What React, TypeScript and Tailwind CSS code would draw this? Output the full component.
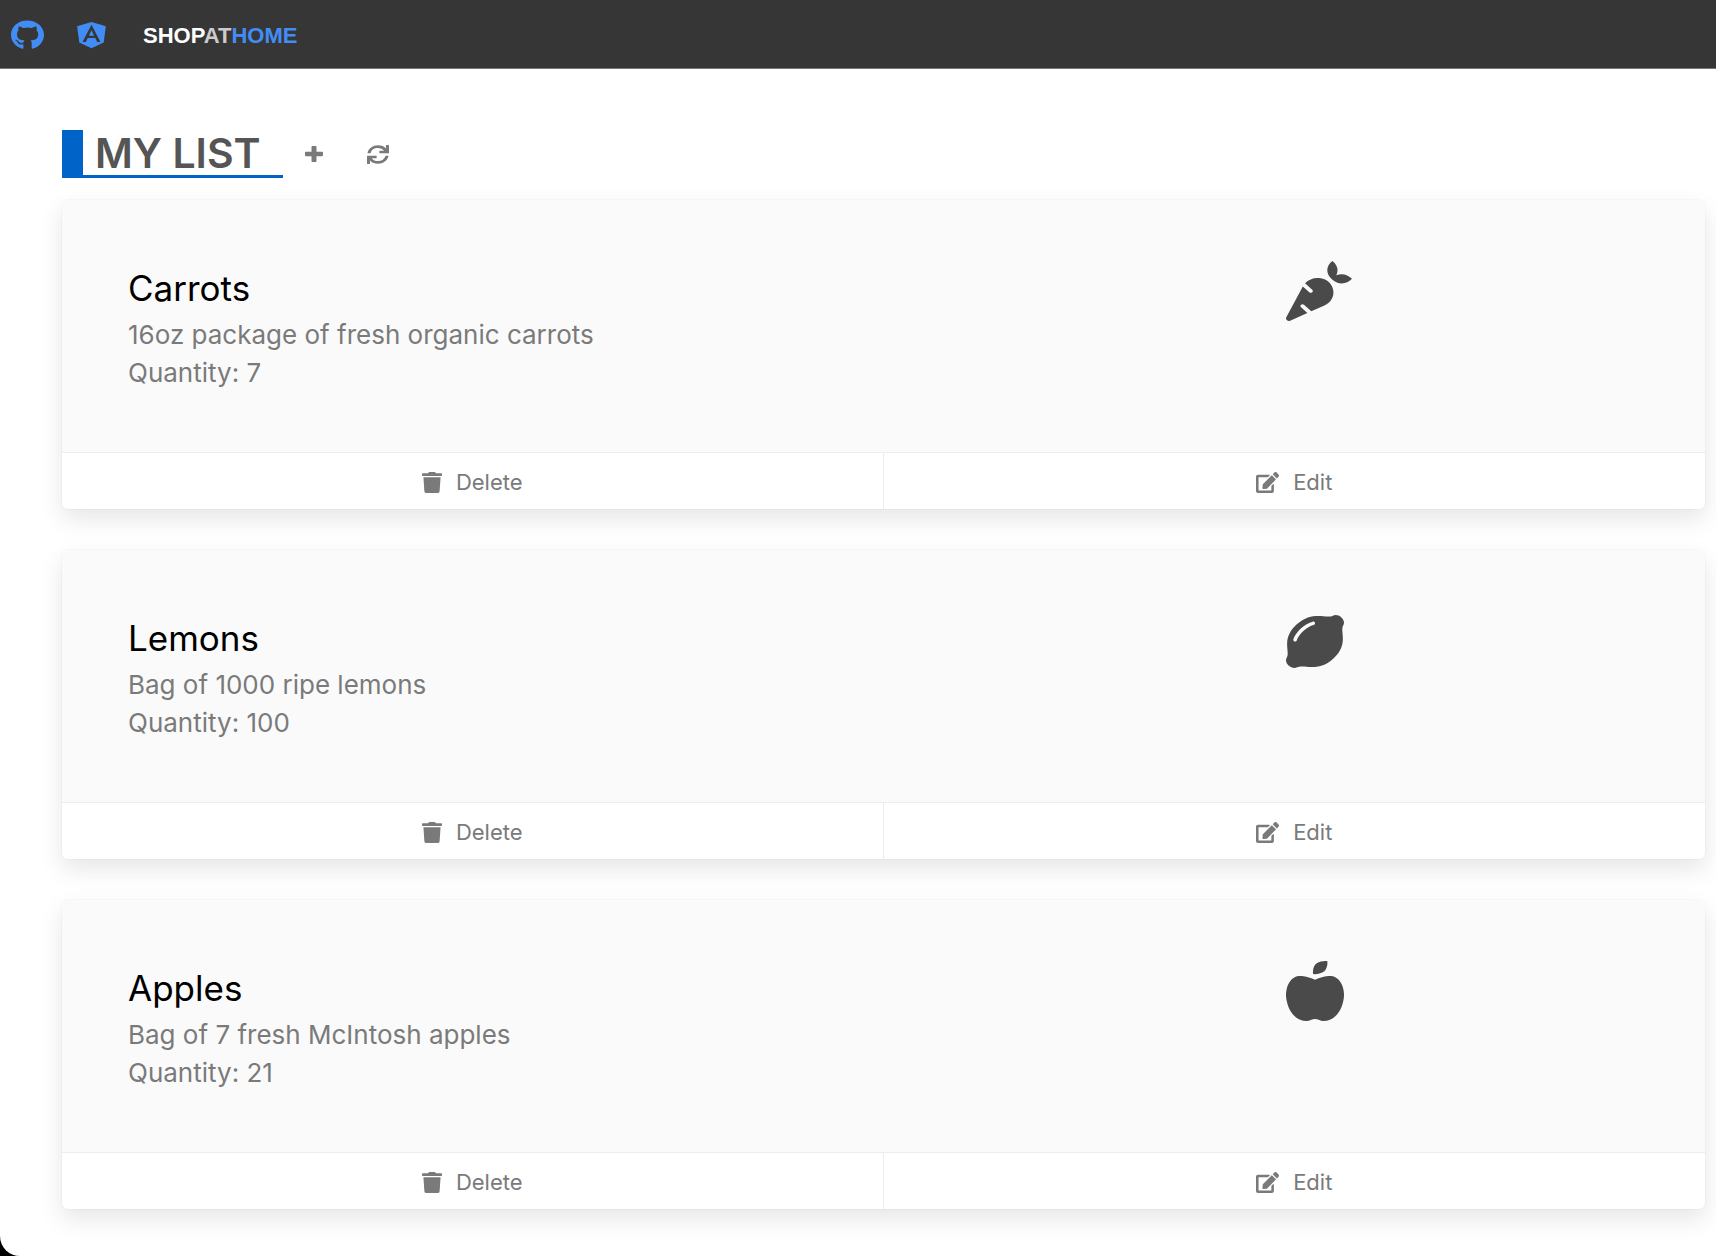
import type { IconType } from "react-icons";
import {
  FaAngular,
  FaAppleAlt,
  FaCarrot,
  FaEdit,
  FaGithub,
  FaLemon,
  FaSync,
  FaTrash,
} from "react-icons/fa";

type Item = {
  name: string;
  description: string;
  quantity: number;
  Icon: IconType;
  iconClass: string;
};

const items: Item[] = [
  {
    name: "Carrots",
    description: "16oz package of fresh organic carrots",
    quantity: 7,
    Icon: FaCarrot,
    iconClass: "h-[60px] w-[66px] text-[#4a4a4a]",
  },
  {
    name: "Lemons",
    description: "Bag of 1000 ripe lemons",
    quantity: 100,
    Icon: FaLemon,
    iconClass: "h-[53px] w-[58px] text-[#4a4a4a]",
  },
  {
    name: "Apples",
    description: "Bag of 7 fresh McIntosh apples",
    quantity: 21,
    Icon: FaAppleAlt,
    iconClass: "h-[60px] w-[58px] text-[#4a4a4a]",
  },
];

function PlusIcon() {
  return (
    <svg
      viewBox="0 32 448 448"
      preserveAspectRatio="none"
      className="h-4 w-[18px] fill-current"
      aria-hidden="true"
    >
      <path d="M424 194H286V56c0-13-11-24-24-24h-76c-13 0-24 11-24 24v138H24c-13 0-24 11-24 24v76c0 13 11 24 24 24h138v138c0 13 11 24 24 24h76c13 0 24-11 24-24V318h138c13 0 24-11 24-24v-76c0-13-11-24-24-24z" />
    </svg>
  );
}

function NavBar() {
  return (
    <nav className="flex h-[69px] items-center border-b border-[#777777] bg-[#363636] pt-0.5 text-[#428df5]">
      <a href="#github" aria-label="GitHub" className="ml-[11px]">
        <FaGithub preserveAspectRatio="none" className="h-[30px] w-[33px]" />
      </a>
      <a href="#angular" aria-label="Angular" className="ml-8">
        <FaAngular preserveAspectRatio="none" className="h-[30px] w-[31px]" />
      </a>
      <a
        href="#home"
        className="ml-9 pt-0.5 font-['Liberation_Sans',sans-serif] text-[22px] leading-6 font-bold"
      >
        <span className="text-white">SHOP</span>
        <span className="text-[#cccccc]">AT</span>
        <span>HOME</span>
      </a>
    </nav>
  );
}

function ItemCard({ name, description, quantity, Icon, iconClass }: Item) {
  return (
    <li className="overflow-hidden rounded-md bg-white shadow-[0_10px_24px_rgba(10,10,10,0.1),0_0_0_1px_rgba(10,10,10,0.02)]">
      <div className="grid h-[252px] grid-cols-2 bg-[#fafafa] pt-[61px]">
        <div className="pt-[5px] pl-[66px]">
          <h2 className="text-[35px] leading-[44px] text-black">{name}</h2>
          <p className="mt-1.5 text-[26px] leading-[38px] text-[#7a7a7a]">{description}</p>
          <p className="text-[26px] leading-[38px] text-[#7a7a7a]">Quantity: {quantity}</p>
        </div>
        <div className="flex h-[60px] items-center pl-[49%]">
          <Icon preserveAspectRatio="none" className={iconClass} />
        </div>
      </div>
      <div className="grid h-[57px] grid-cols-2 border-t border-[#ededed] text-[22px] text-[#7a7a7a]">
        <button className="flex items-center justify-center gap-3.5 border-r border-[#ededed] pt-0.5">
          <FaTrash preserveAspectRatio="none" className="h-[21px] w-5" />
          Delete
        </button>
        <button className="flex items-center justify-center gap-3.5 pt-0.5">
          <FaEdit preserveAspectRatio="none" className="h-[21px] w-[23px]" />
          Edit
        </button>
      </div>
    </li>
  );
}

export default function App() {
  return (
    <div className="bg-black">
      <div className="min-h-screen overflow-hidden rounded-bl-[20px] bg-white pb-[46px] font-['Inter',sans-serif]">
        <NavBar />
        <main className="pt-[61px] pr-[11px] pl-[62px]">
          <header className="flex h-12 items-center text-[#7a7a7a]">
            <h1 className="flex h-12 w-[221px] items-center border-b-[3px] border-l-[21px] border-[#0063c8] pt-0.5 pl-3 text-[41px] leading-none font-semibold whitespace-nowrap text-[#555555]">
              MY LIST
            </h1>
            <button aria-label="Add item" className="ml-[22px]">
              <PlusIcon />
            </button>
            <button aria-label="Refresh list" className="ml-11">
              <FaSync preserveAspectRatio="none" className="h-[19px] w-[22px]" />
            </button>
          </header>
          <ul className="mt-[22px] flex flex-col gap-[41px]">
            {items.map((item) => (
              <ItemCard key={item.name} {...item} />
            ))}
          </ul>
        </main>
      </div>
    </div>
  );
}
